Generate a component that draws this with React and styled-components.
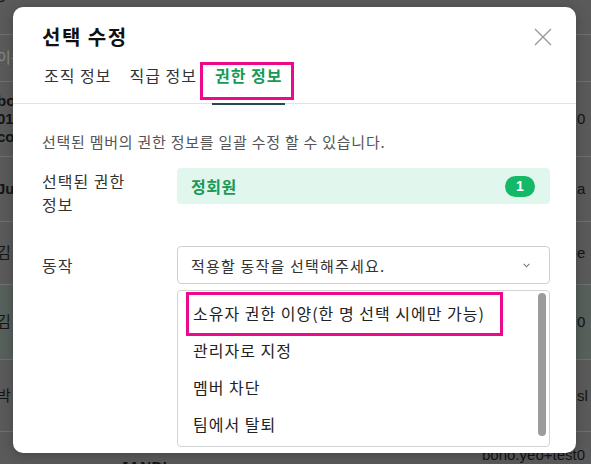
import React from "react";
import styled, { createGlobalStyle } from "styled-components";

const Global = createGlobalStyle`
  html, body { margin: 0; padding: 0; }
  body {
    width: 591px;
    height: 464px;
    overflow: hidden;
    background: #5a5a5a;
    font-family: "Noto Sans CJK KR", "Liberation Sans", sans-serif;
  }
`;

const Page = styled.div`
  position: relative;
  width: 591px;
  height: 464px;
  overflow: hidden;
  background: #5a5a5a;
`;

const BgTable = styled.div`
  display: flex;
  flex-direction: column;
  font-family: "Liberation Sans", "Noto Sans CJK KR", sans-serif;
  color: #141414;
`;

const BgRow = styled.div`
  box-sizing: border-box;
  height: ${(p) => p.$h}px;
  border-bottom: 1px solid #707070;
  background: ${(p) => (p.$sel ? "#57605a" : "transparent")};
  display: grid;
  grid-template-columns: 577px 14px;
  align-items: ${(p) => (p.$top ? "start" : "center")};
`;

const BgLeft = styled.div`
  margin-left: -3px;
  margin-top: ${(p) => p.$mt || 0}px;
  font-size: 15px;
  line-height: 18px;
  font-weight: ${(p) => (p.$bold ? 700 : 400)};
  color: ${(p) => (p.$muted ? "#8a8a8a" : "#141414")};
  white-space: pre-line;
`;

const BgRight = styled.div`
  font-size: 15px;
  line-height: 18px;
  white-space: pre-line;
  overflow: hidden;
`;

const BgBottom = styled.div`
  display: flex;
  height: 32px;
  font-size: 15px;
  line-height: 18px;
  color: #141414;
`;

const BgBrand = styled.div`
  margin: 26px 0 0 120px;
  font-weight: 700;
  letter-spacing: 0.5px;
`;

const BgMail = styled.div`
  margin: 14px 0 0 auto;
  width: 109px;
  white-space: nowrap;
  overflow: hidden;
`;

const Modal = styled.div`
  position: absolute;
  left: 13px;
  top: 7px;
  width: 563px;
  height: 446px;
  box-sizing: border-box;
  background: #fff;
  border-radius: 10px;
  box-shadow: 0 2px 12px rgba(0, 0, 0, 0.25);
  display: flex;
  flex-direction: column;
  overflow: hidden;
  letter-spacing: 1px;
`;

const Header = styled.div`
  display: flex;
  align-items: center;
  justify-content: space-between;
  padding: 16px 24px 0 29px;
`;

const Title = styled.h2`
  margin: 0;
  font-size: 20px;
  line-height: 28px;
  font-weight: 700;
  letter-spacing: 1.5px;
  color: #111;
`;

const CloseButton = styled.button`
  border: 0;
  background: none;
  padding: 0;
  width: 18px;
  height: 18px;
  display: flex;
  cursor: pointer;
`;

const Tabs = styled.div`
  display: flex;
  gap: 18px;
  margin-top: 7px;
  padding-left: 31px;
  border-bottom: 1px solid #e2e2e2;
`;

const Tab = styled.div`
  position: relative;
  padding: 5px 0 16px;
  font-size: 16px;
  line-height: 24px;
  color: ${(p) => (p.$active ? "#179a55" : "#333")};
  font-weight: ${(p) => (p.$active ? 700 : 400)};
  &::after {
    content: "";
    display: ${(p) => (p.$active ? "block" : "none")};
    position: absolute;
    left: -3px;
    right: -3px;
    bottom: -2px;
    height: 2px;
    background: #1f4f47;
  }
`;

const Mark = styled.span`
  position: absolute;
  top: ${(p) => p.$t}px;
  bottom: ${(p) => p.$b}px;
  left: ${(p) => p.$l}px;
  right: ${(p) => p.$r}px;
  border: 3px solid #eb0a8b;
  pointer-events: none;
`;

const Body = styled.div`
  padding: 0 26px 0 29px;
  display: flex;
  flex-direction: column;
`;

const Desc = styled.p`
  margin: 27px 0 0;
  font-size: 15px;
  line-height: 22px;
  color: #555;
  letter-spacing: 0.75px;
`;

const Field = styled.div`
  display: grid;
  grid-template-columns: 135px 1fr;
  align-items: start;
  margin-top: ${(p) => p.$mt}px;
`;

const Label = styled.div`
  max-width: 100px;
  word-break: keep-all;
  font-size: 16px;
  line-height: ${(p) => p.$lh || 23}px;
  padding-top: ${(p) => p.$pt || 0}px;
  color: #333;
`;

const RoleBox = styled.div`
  height: 36px;
  box-sizing: border-box;
  padding: 0 15px 0 14px;
  background: #e1f6ed;
  border-radius: 4px;
  display: flex;
  align-items: center;
  justify-content: space-between;
`;

const RoleName = styled.span`
  font-size: 16px;
  font-weight: 700;
  letter-spacing: 0.5px;
  color: #189a57;
`;

const Badge = styled.span`
  width: 30px;
  height: 21px;
  border-radius: 11px;
  background: #14b867;
  color: #fff;
  font-family: "Liberation Sans", sans-serif;
  font-size: 14px;
  font-weight: 700;
  letter-spacing: 0;
  display: flex;
  align-items: center;
  justify-content: center;
`;

const Control = styled.div`
  display: flex;
  flex-direction: column;
  gap: 6px;
`;

const Select = styled.div`
  height: 38px;
  box-sizing: border-box;
  border: 1px solid #cfcfcf;
  border-radius: 4px;
  padding: 0 19px 0 13px;
  display: flex;
  align-items: center;
  justify-content: space-between;
  font-size: 15px;
  letter-spacing: 1.2px;
  color: #333;
`;

const Menu = styled.div`
  height: 157px;
  box-sizing: border-box;
  border: 1px solid #d3d3d3;
  border-radius: 4px;
  display: flex;
  background: #fff;
`;

const Options = styled.ul`
  list-style: none;
  margin: 0;
  padding: 3px 0 0;
  flex: 1;
`;

const Option = styled.li`
  position: relative;
  height: 37px;
  display: flex;
  align-items: center;
  padding-left: 15px;
  font-size: 16px;
  color: #222;
`;

const ScrollTrack = styled.div`
  width: 8px;
  margin: 2px 3px 10px 0;
  display: flex;
`;

const ScrollThumb = styled.div`
  flex: 1;
  background: #9c9c9c;
  border-radius: 4px;
`;

const CloseIcon = () => (
  <svg width="18" height="18" viewBox="0 0 18 18">
    <path d="M1 1 L17 17 M17 1 L1 17" stroke="#9a9a9a" strokeWidth="1.4" fill="none" />
  </svg>
);

const Chevron = () => (
  <svg width="7" height="5" viewBox="0 0 7 5">
    <path d="M0.7 0.8 L3.5 3.8 L6.3 0.8" stroke="#777" strokeWidth="1.1" fill="none" />
  </svg>
);

const rows = [
  { h: 35, left: "3", right: "", mt: -12, top: true },
  { h: 47, left: "이름", right: "", muted: true },
  { h: 75, left: "bo\n01\nco", right: "0\n", bold: true },
  { h: 65, left: "Ju", right: "a", bold: true },
  { h: 63, left: "김", right: "e" },
  { h: 75, left: "김", right: "0\n", sel: true },
  { h: 72, left: "박", right: "sl" },
];

export default function App() {
  return (
    <Page>
      <Global />
      <BgTable>
        {rows.map((r, i) => (
          <BgRow key={i} $h={r.h} $sel={r.sel} $top={r.top}>
            <BgLeft $bold={r.bold} $muted={r.muted} $mt={r.mt}>
              {r.left}
            </BgLeft>
            <BgRight>{r.right}</BgRight>
          </BgRow>
        ))}
        <BgBottom>
          <BgBrand>JANDI</BgBrand>
          <BgMail>bono.yeo+test0</BgMail>
        </BgBottom>
      </BgTable>

      <Modal>
        <Header>
          <Title>선택 수정</Title>
          <CloseButton aria-label="닫기">
            <CloseIcon />
          </CloseButton>
        </Header>
        <Tabs>
          <Tab>조직 정보</Tab>
          <Tab>직급 정보</Tab>
          <Tab $active>
            권한 정보
            <Mark $t={4} $b={3} $l={-15} $r={-12} />
          </Tab>
        </Tabs>
        <Body>
          <Desc>선택된 멤버의 권한 정보를 일괄 수정 할 수 있습니다.</Desc>
          <Field $mt={15}>
            <Label $pt={2}>선택된 권한 정보</Label>
            <RoleBox>
              <RoleName>정회원</RoleName>
              <Badge>1</Badge>
            </RoleBox>
          </Field>
          <Field $mt={30}>
            <Label $lh={38}>동작</Label>
            <Control>
              <Select>
                <span>적용할 동작을 선택해주세요.</span>
                <Chevron />
              </Select>
              <Menu>
                <Options>
                  <Option>
                    소유자 권한 이양(한 명 선택 시에만 가능)
                    <Mark $t={-2} $b={-5} $l={8} $r={35} />
                  </Option>
                  <Option>관리자로 지정</Option>
                  <Option>멤버 차단</Option>
                  <Option>팀에서 탈퇴</Option>
                </Options>
                <ScrollTrack>
                  <ScrollThumb />
                </ScrollTrack>
              </Menu>
            </Control>
          </Field>
        </Body>
      </Modal>
    </Page>
  );
}
